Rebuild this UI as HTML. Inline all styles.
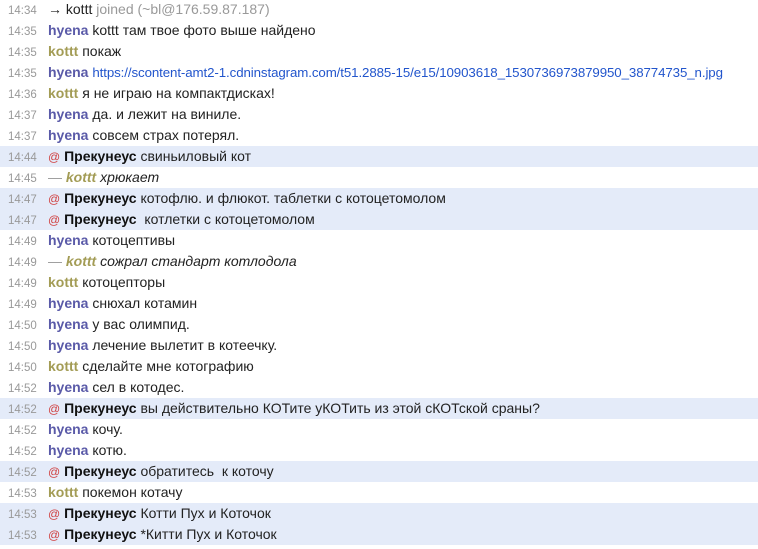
<!DOCTYPE html>
<html><head><meta charset="utf-8"><style>
body{margin:0;background:#fff;width:758px;height:549px;overflow:hidden;font-family:"Liberation Sans","Noto Sans CJK SC",sans-serif;}
.c{position:absolute;top:-1px;left:0;width:758px}
.r{height:21px;line-height:21px;position:relative;white-space:nowrap;font-size:14px;color:#222}
.h{background:#e4ebf9}
.t{position:absolute;left:8px;top:2px;font-size:11.5px;color:#999;width:30px}
.m{position:absolute;left:48px}
.hy{color:#5a5aa8;font-weight:bold}
.ko{color:#a39c55;font-weight:bold}
.pr{color:#111;font-weight:bold}
.at{color:#d04040;font-size:12px}
.g{color:#999}
a{color:#2255cc;text-decoration:none;font-size:13.3px;letter-spacing:-0.1px}
i{font-style:italic}
</style></head><body><div class="c">
<div class="r"><span class="t">14:34</span><span class="m">→ kottt <span class="g">joined (~bl@176.59.87.187)</span></span></div>
<div class="r"><span class="t">14:35</span><span class="m"><span class="hy">hyena</span> kottt там твое фото выше найдено</span></div>
<div class="r"><span class="t">14:35</span><span class="m"><span class="ko">kottt</span> покаж</span></div>
<div class="r"><span class="t">14:35</span><span class="m"><span class="hy">hyena</span> <a>https://scontent-amt2-1.cdninstagram.com/t51.2885-15/e15/10903618_1530736973879950_38774735_n.jpg</a></span></div>
<div class="r"><span class="t">14:36</span><span class="m"><span class="ko">kottt</span> я не играю на компактдисках!</span></div>
<div class="r"><span class="t">14:37</span><span class="m"><span class="hy">hyena</span> да. и лежит на виниле.</span></div>
<div class="r"><span class="t">14:37</span><span class="m"><span class="hy">hyena</span> совсем страх потерял.</span></div>
<div class="r h"><span class="t">14:44</span><span class="m"><span class="at">@</span> <span class="pr">Прекунеус</span> свиньиловый кот</span></div>
<div class="r"><span class="t">14:45</span><span class="m"><span class="g">—</span> <i><span class="ko">kottt</span> хрюкает</i></span></div>
<div class="r h"><span class="t">14:47</span><span class="m"><span class="at">@</span> <span class="pr">Прекунеус</span> котофлю. и флюкот. таблетки с котоцетомолом</span></div>
<div class="r h"><span class="t">14:47</span><span class="m"><span class="at">@</span> <span class="pr">Прекунеус</span>&nbsp; котлетки с котоцетомолом</span></div>
<div class="r"><span class="t">14:49</span><span class="m"><span class="hy">hyena</span> котоцептивы</span></div>
<div class="r"><span class="t">14:49</span><span class="m"><span class="g">—</span> <i><span class="ko">kottt</span> сожрал стандарт котлодола</i></span></div>
<div class="r"><span class="t">14:49</span><span class="m"><span class="ko">kottt</span> котоцепторы</span></div>
<div class="r"><span class="t">14:49</span><span class="m"><span class="hy">hyena</span> снюхал котамин</span></div>
<div class="r"><span class="t">14:50</span><span class="m"><span class="hy">hyena</span> у вас олимпид.</span></div>
<div class="r"><span class="t">14:50</span><span class="m"><span class="hy">hyena</span> лечение вылетит в котеечку.</span></div>
<div class="r"><span class="t">14:50</span><span class="m"><span class="ko">kottt</span> сделайте мне котографию</span></div>
<div class="r"><span class="t">14:52</span><span class="m"><span class="hy">hyena</span> сел в котодес.</span></div>
<div class="r h"><span class="t">14:52</span><span class="m"><span class="at">@</span> <span class="pr">Прекунеус</span> вы действительно КОТите уКОТить из этой сКОТской сраны?</span></div>
<div class="r"><span class="t">14:52</span><span class="m"><span class="hy">hyena</span> кочу.</span></div>
<div class="r"><span class="t">14:52</span><span class="m"><span class="hy">hyena</span> котю.</span></div>
<div class="r h"><span class="t">14:52</span><span class="m"><span class="at">@</span> <span class="pr">Прекунеус</span> обратитесь&nbsp; к коточу</span></div>
<div class="r"><span class="t">14:53</span><span class="m"><span class="ko">kottt</span> покемон котачу</span></div>
<div class="r h"><span class="t">14:53</span><span class="m"><span class="at">@</span> <span class="pr">Прекунеус</span> Котти Пух и Коточок</span></div>
<div class="r h"><span class="t">14:53</span><span class="m"><span class="at">@</span> <span class="pr">Прекунеус</span> *Китти Пух и Коточок</span></div>
</div></body></html>
